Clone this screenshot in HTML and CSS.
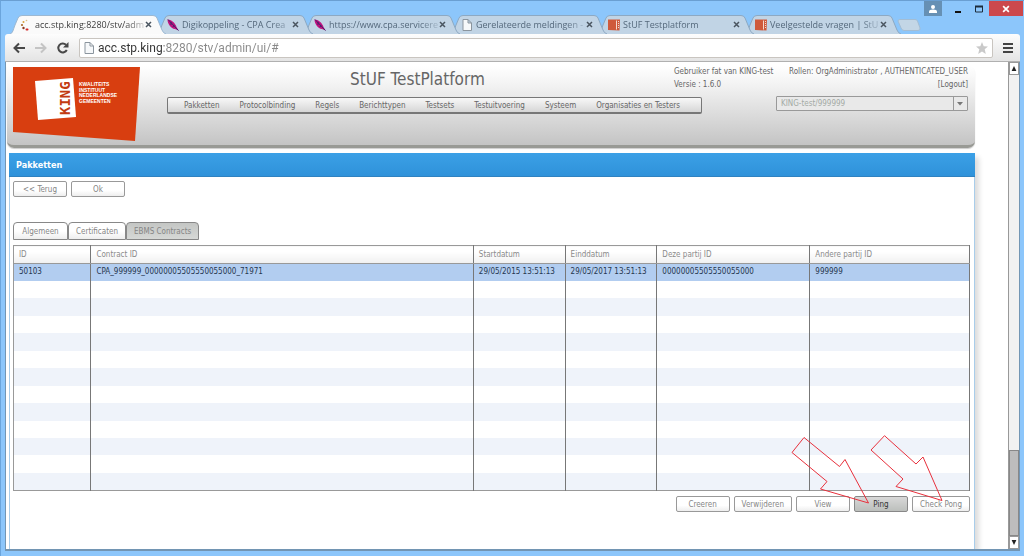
FILE: index.html
```html
<!DOCTYPE html>
<html lang="nl">
<head>
<meta charset="utf-8">
<title>StUF TestPlatform</title>
<link rel="stylesheet" href="styles.css">
</head>
<body>
<svg class="defs" aria-hidden="true">
  <defs>
    <symbol id="tab-shape" viewBox="0 0 156 19" preserveAspectRatio="none">
      <path d="M0 19 C3 18 3 15 5 10 L8 3 Q9 .5 12 .5 H143 Q146 .5 147 3 L152 15 Q153 18 156 19"/>
    </symbol>
    <symbol id="feather" viewBox="0 0 12 12">
      <path d="M.5 .5 C4 .5 8.500 4 9.500 8 L11.500 11.500 L8 10 C4 9.500 .5 5 .5 .5Z" fill="#c0127f"/>
      <path d="M1 .5 L11.500 11.500 M4 3 L4 6 M7 6 L6 8" stroke="#43206b" fill="none"/>
    </symbol>
    <symbol id="page" viewBox="0 0 10 12">
      <path d="M1 .5 H6 L9.500 4 V11.500 H1Z M6 .5 V4 H9.500" fill="#f6f8fa" stroke="#8b959e"/>
    </symbol>
    <symbol id="king-mini" viewBox="0 0 12 12">
      <path d="M0 .5 H12 L11.500 11.500 L0 11Z" fill="#cf5a3b"/>
      <path d="M8.500 1.500 V10.500" stroke="#f3d9cf"/>
      <path d="M10.500 2 V10" stroke="#f3d9cf" stroke-dasharray="1 1"/>
    </symbol>
    <symbol id="cross" viewBox="0 0 7 7">
      <path d="M1 1 L6 6 M6 1 L1 6" stroke="currentColor" stroke-width="1.500"/>
    </symbol>
  </defs>
</svg>

<div class="window">
  <div class="titlebar">
    <div class="tabs">
      <div class="tab tab-active">
        <svg class="tab-bg"><use href="#tab-shape"/></svg>
        <svg class="tab-icon" viewBox="0 0 12 12"><circle cx="3.500" cy="3" r="1" fill="#d9a03a"/><circle cx="6.500" cy="1.500" r=".8" fill="#d8c08a"/><circle cx="2" cy="6" r="1.100" fill="#a8682a"/><circle cx="3.500" cy="9" r="1.200" fill="#8a3b22"/><circle cx="6.500" cy="10.500" r="1" fill="#c33"/><circle cx="7.500" cy="10.500" r="1" fill="#d22"/></svg>
        <button class="tab-title">acc.stp.king:8280/stv/adm</button>
        <button class="tab-close" aria-label="Sluiten"><svg><use href="#cross"/></svg></button>
      </div>
      <div class="tab">
        <svg class="tab-bg"><use href="#tab-shape"/></svg>
        <svg class="tab-icon"><use href="#feather"/></svg>
        <button class="tab-title">Digikoppeling - CPA Crea</button>
        <button class="tab-close" aria-label="Sluiten"><svg><use href="#cross"/></svg></button>
      </div>
      <div class="tab">
        <svg class="tab-bg"><use href="#tab-shape"/></svg>
        <svg class="tab-icon"><use href="#feather"/></svg>
        <button class="tab-title">https://www.cpa.servicere</button>
        <button class="tab-close" aria-label="Sluiten"><svg><use href="#cross"/></svg></button>
      </div>
      <div class="tab">
        <svg class="tab-bg"><use href="#tab-shape"/></svg>
        <svg class="tab-icon"><use href="#page"/></svg>
        <button class="tab-title">Gerelateerde meldingen -</button>
        <button class="tab-close" aria-label="Sluiten"><svg><use href="#cross"/></svg></button>
      </div>
      <div class="tab">
        <svg class="tab-bg"><use href="#tab-shape"/></svg>
        <svg class="tab-icon"><use href="#king-mini"/></svg>
        <button class="tab-title">StUF Testplatform</button>
        <button class="tab-close" aria-label="Sluiten"><svg><use href="#cross"/></svg></button>
      </div>
      <div class="tab">
        <svg class="tab-bg"><use href="#tab-shape"/></svg>
        <svg class="tab-icon"><use href="#king-mini"/></svg>
        <button class="tab-title">Veelgestelde vragen | StU</button>
        <button class="tab-close" aria-label="Sluiten"><svg><use href="#cross"/></svg></button>
      </div>
      <button class="new-tab" aria-label="Nieuw tabblad"><svg viewBox="0 0 24 12"><path d="M1 2 Q1 .5 3 .5 H18 Q20 .5 20.500 2 L23 9 Q23.500 11.500 21 11.500 H7 Q5 11.500 4 9Z" fill="#c3d6e6" stroke="#a3bdd4"/></svg></button>
    </div>
    <div class="window-controls">
      <button class="profile" aria-label="Profiel"><svg viewBox="0 0 10 8"><circle cx="5" cy="2" r="2" fill="#fff"/><path d="M1 8 V6.500 Q1 4.500 5 4.500 Q9 4.500 9 6.500 V8Z" fill="#fff"/></svg></button>
      <button class="win-btn" aria-label="Minimaliseren"><svg viewBox="0 0 10 8"><path d="M2 7 H8" stroke="#111" stroke-width="2"/></svg></button>
      <button class="win-btn" aria-label="Maximaliseren"><svg viewBox="0 0 10 8"><path d="M1.500 1.500 H8.500 V7 H1.500Z" fill="none" stroke="#1c2c3c"/><path d="M1 1.500 H9" stroke="#1c2c3c" stroke-width="2"/></svg></button>
      <button class="win-close" aria-label="Sluiten"><svg viewBox="0 0 7 7"><use href="#cross"/></svg></button>
    </div>
  </div>

  <div class="toolbar">
    <button class="tool" aria-label="Terug"><svg viewBox="0 0 12 12"><path d="M12 6 H2 M6 1.500 L1.500 6 L6 10.500" fill="none" stroke="#484848" stroke-width="2"/></svg></button>
    <button class="tool" aria-label="Vooruit"><svg viewBox="0 0 12 12"><path d="M0 6 H10 M6 1.500 L10.500 6 L6 10.500" fill="none" stroke="#c4c4c4" stroke-width="2"/></svg></button>
    <button class="tool" aria-label="Vernieuwen"><svg viewBox="0 0 12 12"><path d="M9.800 8 A4.500 4.500 0 1 1 9 2.700" fill="none" stroke="#484848" stroke-width="2"/><path d="M11.500 0 V5.500 H6Z" fill="#484848"/></svg></button>
    <div class="address">
      <svg class="address-icon"><use href="#page"/></svg>
      <input class="address-input" type="text" aria-label="Adres" value="acc.stp.king:8280/stv/admin/ui/#">
      <svg class="star" viewBox="0 0 12 12"><path d="M6 0 L7.700 4.300 L12 4.500 L8.700 7.300 L9.800 12 L6 9.400 L2.200 12 L3.300 7.300 L0 4.500 L4.300 4.300Z" fill="#c9c9c9"/></svg>
    </div>
    <button class="menu-btn" aria-label="Menu"><svg viewBox="0 0 10 10"><path d="M0 1 H10 M0 5 H10 M0 9 H10" stroke="#444" stroke-width="2"/></svg></button>
  </div>

  <div class="viewport">
    <div class="page">
      <header class="header">
        <svg class="logo" viewBox="0 0 128 75" role="img" aria-label="KING Kwaliteitsinstituut Nederlandse Gemeenten">
          <path d="M0 0 H127 L122 74 L0 65Z" fill="#d83e10"/>
          <path d="M22 14 L60 11 L63 50 L25 53Z" fill="#fff"/>
          <text class="logo-king" transform="translate(57 48) rotate(-90)">KING</text>
          <text class="logo-name" x="66" y="19">KWALITEITS</text>
          <text class="logo-name" x="66" y="25">INSTITUUT</text>
          <text class="logo-name" x="66" y="30">NEDERLANDSE</text>
          <text class="logo-name" x="66" y="36">GEMEENTEN</text>
        </svg>
        <div class="header-main">
          <div class="header-top">
            <h1 class="app-title">StUF TestPlatform</h1>
            <div class="user">
              <div class="user-row"><span>Gebruiker fat van KING-test</span><span>Rollen: OrgAdministrator , AUTHENTICATED_USER</span></div>
              <div class="user-row"><span>Versie : 1.6.0</span><a class="logout" href="#">[Logout]</a></div>
            </div>
          </div>
          <div class="header-bottom">
            <nav class="nav">
              <a href="#">Pakketten</a><a href="#">Protocolbinding</a><a href="#">Regels</a><a href="#">Berichttypen</a><a href="#">Testsets</a><a href="#">Testuitvoering</a><a href="#">Systeem</a><a href="#">Organisaties en Testers</a>
            </nav>
            <div class="org">
              <select class="org-select" aria-label="Organisatie" disabled><option>KING-test/999999</option></select>
              <svg class="org-arrow" viewBox="0 0 14 13"><path d="M.5 0 V13" stroke="#999"/><path d="M4 5 H10 L7 8.500Z" fill="#777"/></svg>
            </div>
          </div>
        </div>
      </header>

      <main class="panel">
        <h2 class="panel-title">Pakketten</h2>
        <div class="panel-body">
          <div class="actions">
            <button class="btn">&lt;&lt; Terug</button>
            <button class="btn">Ok</button>
          </div>
          <div class="subtabs" role="tablist">
            <button class="subtab" role="tab">Algemeen</button>
            <button class="subtab" role="tab">Certificaten</button>
            <button class="subtab subtab-active" role="tab" aria-selected="true">EBMS Contracts</button>
          </div>
          <table class="grid">
            <colgroup><col class="c-id"><col class="c-contract"><col class="c-date"><col class="c-date"><col class="c-party"><col class="c-other"></colgroup>
            <thead><tr><th>ID</th><th>Contract ID</th><th>Startdatum</th><th>Einddatum</th><th>Deze partij ID</th><th>Andere partij ID</th></tr></thead>
            <tbody>
              <tr class="selected"><td>50103</td><td>CPA_999999_00000005505550055000_71971</td><td>29/05/2015 13:51:13</td><td>29/05/2017 13:51:13</td><td>00000005505550055000</td><td>999999</td></tr>
              <tr><td></td><td></td><td></td><td></td><td></td><td></td></tr>
              <tr><td></td><td></td><td></td><td></td><td></td><td></td></tr>
              <tr><td></td><td></td><td></td><td></td><td></td><td></td></tr>
              <tr><td></td><td></td><td></td><td></td><td></td><td></td></tr>
              <tr><td></td><td></td><td></td><td></td><td></td><td></td></tr>
              <tr><td></td><td></td><td></td><td></td><td></td><td></td></tr>
              <tr><td></td><td></td><td></td><td></td><td></td><td></td></tr>
              <tr><td></td><td></td><td></td><td></td><td></td><td></td></tr>
              <tr><td></td><td></td><td></td><td></td><td></td><td></td></tr>
              <tr><td></td><td></td><td></td><td></td><td></td><td></td></tr>
              <tr><td></td><td></td><td></td><td></td><td></td><td></td></tr>
              <tr><td></td><td></td><td></td><td></td><td></td><td></td></tr>
            </tbody>
          </table>
          <div class="row-actions">
            <button class="btn">Creeren</button>
            <button class="btn">Verwijderen</button>
            <button class="btn">View</button>
            <button class="btn btn-pressed">Ping</button>
            <button class="btn">Check Pong</button>
            <svg class="pointers" viewBox="0 0 152 70" aria-hidden="true">
              <path d="M1 17.500 L13 2.500 L48.500 31.500 L54 24.500 L77.500 68 L29.500 54 L36 46.500Z"/>
              <path d="M80 15 L93.500 .7 L125 29 L132 22 L151 65.500 L105 51.500 L112 44Z"/>
            </svg>
          </div>
        </div>
      </main>
    </div>
    <div class="scrollbar" aria-hidden="true">
      <svg class="scroll-arrow" viewBox="0 0 10 12"><path d="M2 9 L5 3 L8 9Z" fill="#222"/></svg>
      <div class="scroll-track"></div>
      <div class="scroll-thumb"></div>
      <svg class="scroll-arrow" viewBox="0 0 10 12"><path d="M2 3 L5 9 L8 3Z" fill="#222"/></svg>
    </div>
  </div>
</div>
</body>
</html>
```
FILE: styles.css
```css
* { box-sizing: border-box; }
body { margin: 0; font-family: "DejaVu Sans Condensed", "DejaVu Sans", sans-serif; font-size: 8px; color: #777; }
button { margin: 0; padding: 0; border: 0; background: none; font: inherit; color: inherit; }
a { color: inherit; text-decoration: none; }
svg { display: block; }
.defs { position: absolute; width: 0; height: 0; }

.window { display: flex; flex-direction: column; min-height: 100vh; padding: 0 4px 5px; background: #8cc6fb; border-top: 1px solid #6a9fd2; border-left: 1px solid #6ba5dc; }

/* title bar and browser tabs */
.titlebar { display: flex; justify-content: space-between; height: 33px; }
.tabs { display: flex; align-items: flex-end; padding-left: 5px; font-family: "Open Sans", "Noto Sans", sans-serif; font-size: 9px; }
.tab { position: relative; display: flex; align-items: center; width: 147px; height: 19px; padding: 0 5px 0 10px; color: #55697c; }
.tab-bg { position: absolute; top: 0; left: 0; width: 156px; height: 19px; fill: #c1d4e5; stroke: #8da9c3; }
.tab-active { z-index: 9; color: #3d3d3d; }
.tab-active .tab-bg { fill: #fafafa; stroke: #9cb8d2; }
.tab:nth-child(2) { z-index: 6; }
.tab:nth-child(3) { z-index: 5; }
.tab:nth-child(4) { z-index: 4; }
.tab:nth-child(5) { z-index: 3; }
.tab:nth-child(6) { z-index: 2; }
.tab-icon { position: relative; flex: none; width: 12px; height: 12px; }
.tab-title { position: relative; flex: 1; min-width: 0; margin-left: 3px; white-space: nowrap; text-align: left; line-height: 14px; mask-image: linear-gradient(to right, #000 82%, rgb(0 0 0 / .2)); }
.tab-close { position: relative; width: 7px; height: 7px; color: #4a5560; }
.tab-close svg { width: 7px; height: 7px; }
.new-tab { align-self: flex-end; margin: 0 0 3px 5px; }
.new-tab svg { width: 24px; height: 12px; }

.window-controls { display: flex; align-items: flex-start; margin-right: -4px; }
.window-controls button { display: grid; place-items: center; height: 15px; }
.window-controls svg { width: 10px; height: 8px; }
.profile { width: 18px; margin-right: 5px; background: #6690b4; }
.win-btn { width: 21px; }
.win-close { width: 34px; margin-right: 1px; background: #cc484c; color: #fff; }

/* address bar */
.toolbar { display: flex; align-items: center; gap: 10px; height: 28px; padding: 0 7px 0 8px; background: linear-gradient(#fdfdfd, #e4e4e4); border-bottom: 1px solid #b0b0b0; border-radius: 3px 3px 0 0; }
.tool svg { width: 12px; height: 12px; }
.address { display: flex; flex: 1; align-items: center; height: 20px; padding: 0 4px; background: #fff; border: 1px solid #c9c5c0; border-radius: 2px; }
.address-icon { width: 10px; height: 12px; }
.address-input { flex: 1; min-width: 0; height: 18px; padding: 0; margin: 0 4px; border: 0; font: 12px/18px Roboto, "Open Sans", sans-serif; color: transparent; background: linear-gradient(to right, #333 66px, #888 66px); background-clip: text; }
.star { width: 12px; height: 12px; }
.menu-btn svg { width: 10px; height: 10px; }

/* page area */
.viewport { display: flex; flex: 1; background: #fff; border: 1px solid #7295b3; border-top: 0; border-bottom-width: 2px; }
.page { display: flex; flex: 1; flex-direction: column; padding: 4px 33px 0 1px; }
.header { display: flex; gap: 26px; height: 82px; padding: 0 7px 0 6px; border-bottom: 3px solid #999a95; border-radius: 0 7px 7px 7px; background: linear-gradient(#fff, #f2f2f2 25%, #c4c4c4); box-shadow: 0 1px 1px #ccc; }
.logo { flex: none; width: 128px; height: 75px; margin-top: 1px; }
.logo-king { font: bold 14px "DejaVu Sans Mono", monospace; fill: #c23a12; }
.logo-name { font: bold 5px "Liberation Sans", sans-serif; fill: #fff; }
.header-main { flex: 1; margin-top: -1px; }
.header-top { display: flex; justify-content: space-between; height: 31px; padding-left: 183px; }
.app-title { margin: 0; font-size: 17px; line-height: 28px; font-weight: normal; color: #666; }
.user { min-width: 294px; line-height: 13px; white-space: nowrap; color: #666; }
.user-row { display: flex; justify-content: space-between; gap: 8px; }
.header-bottom { display: flex; align-items: flex-start; justify-content: space-between; }
.nav { display: flex; gap: 20px; margin-top: 1px; padding: 1px 21px 0 16px; line-height: 13px; white-space: nowrap; color: #666; border: 1px solid #777; border-bottom-width: 2px; border-radius: 2px; background: linear-gradient(#f8f8f8, #d6d6d6); }
.org { position: relative; width: 192px; height: 15px; }
.org-select { width: 100%; height: 15px; padding: 0 16px 0 4px; appearance: none; font: inherit; color: #a3aaa5; opacity: 1; border: 1px solid #999; border-radius: 1px; background: #e9e9e9; }
.org-arrow { position: absolute; top: 1px; right: 1px; width: 14px; height: 13px; }

.panel { display: flex; flex: 1; flex-direction: column; margin: 5px 0 0 2px; border-left: 1px solid #a9cdea; border-right: 1px solid #a9cdea; box-shadow: 4px 4px 5px #ddd; clip-path: inset(0 -10px 0 0); }
.panel-title { margin: 0 -1px; padding: 1px 0 0 7px; font-size: 9px; line-height: 22px; color: #fff; background: linear-gradient(#3ba0e6, #2f92da); border-bottom: 1px solid #2f82c0; }
.panel-body { padding: 4px 4px 0 3px; }
.actions { display: flex; gap: 4px; }
.btn { min-width: 54px; height: 16px; padding: 0 7px; color: #858585; border: 1px solid #999; border-radius: 2px; background: linear-gradient(#fff 60%, #eee); }
.btn-pressed { color: #333; border-color: #888; background: linear-gradient(#d8d8d8, #bcbfbc); }
.subtabs { display: flex; margin: 25px 0 5px; }
.subtab { min-width: 55px; height: 18px; padding: 0 7px; color: #858585; border: 1px solid #888; border-radius: 4px 4px 0 0; background: linear-gradient(#fff 50%, #eee); }
.subtab-active { background: linear-gradient(#c4c6c4, #d6d8d6); }

.grid { width: 100%; height: 246px; table-layout: fixed; border-collapse: collapse; border: 1px solid #999; }
.grid th, .grid td { padding: 0 0 0 5px; border-right: 1px solid #777; text-align: left; font-weight: normal; white-space: nowrap; line-height: 12px; }
.grid td { height: 17px; }
.grid th { height: 18px; color: #8a8a8a; border-bottom: 1px solid #999; background: linear-gradient(#fff 30%, #f0f0f0); }
.grid tr:nth-child(odd) { background: #eff3fa; }
.grid tbody tr.selected { color: #26364f; background: #b2cdf0; }
.c-id { width: 8.1%; }
.c-contract { width: 40%; }
.c-date { width: 9.6%; }
.c-party { width: 16%; }

.row-actions { position: relative; display: flex; justify-content: flex-end; gap: 4px; margin-top: 5px; }
.pointers { position: absolute; right: 27px; bottom: 7px; width: 152px; height: 70px; pointer-events: none; fill: none; stroke: #e8303c; }

.scrollbar { display: flex; flex-direction: column; width: 11px; background: #f1f1f1; border-left: 1px solid #999; }
.scroll-arrow { width: 10px; height: 13px; background: #fff; border: 1px solid #999; }
.scroll-track { flex: 376; }
.scroll-thumb { flex: 84; background: #bdbdbd; border: 1px solid #888; }
```
